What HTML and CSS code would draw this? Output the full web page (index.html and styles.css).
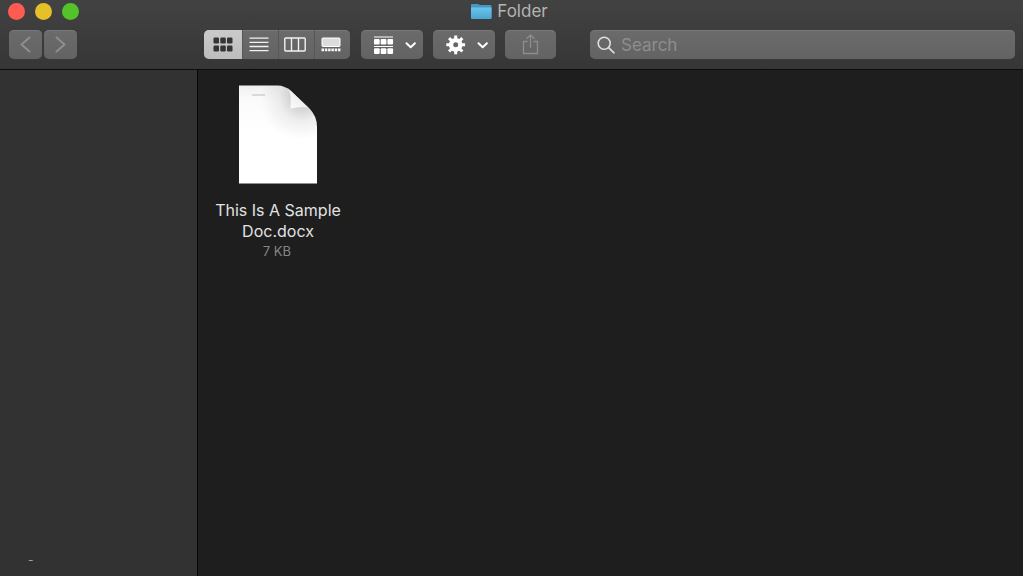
FILE: index.html
```html
<!DOCTYPE html>
<html lang="en">
<head>
<meta charset="utf-8">
<meta name="viewport" content="width=device-width, initial-scale=1">
<title>Folder</title>
<link rel="stylesheet" href="styles.css">
</head>
<body>
<div class="window">
  <header class="chrome">
    <div class="titlebar">
      <div class="lights">
        <button class="light light-close" type="button" aria-label="Close"></button>
        <button class="light light-minimize" type="button" aria-label="Minimize"></button>
        <button class="light light-zoom" type="button" aria-label="Zoom"></button>
      </div>
      <h1 class="title">
        <svg width="21" height="17" viewBox="0 0 21 17" aria-hidden="true">
          <defs>
            <linearGradient id="folder" x1="0" y1="0" x2="0" y2="1">
              <stop offset="0" stop-color="#6cc5eb"/>
              <stop offset="1" stop-color="#4ba5d0"/>
            </linearGradient>
          </defs>
          <path d="M0 2q0-1 1-1h6l2 1h10.500q1 0 1 1v12H0z" fill="#4398c4"/>
          <path d="M0 4.500h20.500V15.200q0 .8-1 .8H1q-1 0-1-.8z" fill="url(#folder)"/>
        </svg>
        <span>Folder</span>
      </h1>
    </div>
    <div class="toolbar">
      <nav class="history" aria-label="History">
        <button class="control nav" type="button" aria-label="Back">
          <svg width="33" height="29" viewBox="0 0 33 29"><path d="M20.500 7.500 12.500 14.500l8 7" class="line dim"/></svg>
        </button>
        <button class="control nav" type="button" aria-label="Forward">
          <svg width="33" height="29" viewBox="0 0 33 29"><path d="M12.500 7.500l8 7-8 7" class="line dim"/></svg>
        </button>
      </nav>
      <div class="views" role="group" aria-label="View">
        <button class="view selected" type="button" aria-label="Icons" aria-pressed="true">
          <svg width="20" height="15" viewBox="0 0 20 15" fill="#353535">
            <rect x="0.500" y="0.500" width="5.500" height="6" rx="1.200"/><rect x="7.300" y="0.500" width="5.500" height="6" rx="1.200"/><rect x="14" y="0.500" width="5.500" height="6" rx="1.200"/>
            <rect x="0.500" y="8.500" width="5.500" height="6" rx="1.200"/><rect x="7.300" y="8.500" width="5.500" height="6" rx="1.200"/><rect x="14" y="8.500" width="5.500" height="6" rx="1.200"/>
          </svg>
        </button>
        <button class="view" type="button" aria-label="List" aria-pressed="false">
          <svg width="20" height="15" viewBox="0 0 20 15"><path d="M.5 1.200h19M.5 5.300h19M.5 9.500h19M.5 13.600h19" stroke="#f2f2f2" stroke-width="1.300"/></svg>
        </button>
        <button class="view" type="button" aria-label="Columns" aria-pressed="false">
          <svg width="22" height="15" viewBox="0 0 22 15"><path d="M1.700 1h18.600q.9 0 .9.900v11.200q0 .9-.9.900H1.700q-.9 0-.9-.9V1.900q0-.9.9-.9zM7.500 1v13M14.500 1v13" fill="none" stroke="#f2f2f2" stroke-width="1.400"/></svg>
        </button>
        <button class="view" type="button" aria-label="Gallery" aria-pressed="false">
          <svg width="20" height="15" viewBox="0 0 20 15">
            <rect x="1" y="1" width="18" height="8.500" rx="0.800" fill="#dcdcdc" stroke="#fff"/>
            <path d="M.5 12.900h19" stroke="#f5f5f5" stroke-width="2.600" stroke-dasharray="2.500 .8"/>
          </svg>
        </button>
      </div>
      <button class="control menu" type="button" aria-label="Arrange by" aria-haspopup="menu">
        <svg width="62" height="29" viewBox="0 0 62 29">
          <path d="M13 7h19M13 16.500h19" stroke="#fff" stroke-width="1.200"/>
          <g fill="#fff">
            <rect x="13" y="9" width="5.700" height="5.500" rx="1"/><rect x="19.700" y="9" width="5.700" height="5.500" rx="1"/><rect x="26.400" y="9" width="5.700" height="5.500" rx="1"/>
            <rect x="13" y="18.300" width="5.700" height="5.700" rx="1"/><rect x="19.700" y="18.300" width="5.700" height="5.700" rx="1"/><rect x="26.400" y="18.300" width="5.700" height="5.700" rx="1"/>
          </g>
          <path d="M45.500 13.300l4.200 4 4.200-4" class="line bright"/>
        </svg>
      </button>
      <button class="control menu" type="button" aria-label="Action" aria-haspopup="menu">
        <svg width="62" height="29" viewBox="0 0 62 29">
          <g transform="translate(22.700 14.800)">
            <g stroke="#fff" stroke-width="3">
              <path d="M0-9.400V-4M0 9.400V4M-9.400 0H-4M9.400 0H4"/>
              <path d="M0-9.400V-4M0 9.400V4M-9.400 0H-4M9.400 0H4" transform="rotate(45)"/>
            </g>
            <circle r="4.700" fill="none" stroke="#fff" stroke-width="4.400"/>
          </g>
          <path d="M45.500 13.300l4.200 4 4.200-4" class="line bright"/>
        </svg>
      </button>
      <button class="control share" type="button" aria-label="Share">
        <svg width="51" height="29" viewBox="0 0 51 29"><path d="M22.500 11.500h-4v12h14v-12h-4M25.500 18V5M21.500 8.800l4-4 4 4" fill="none" stroke="#8d8d8d" stroke-width="1.300"/></svg>
      </button>
      <label class="control search">
        <svg width="18" height="18" viewBox="0 0 18 18" aria-hidden="true"><circle cx="7.200" cy="7.200" r="6" class="line glass"/><path d="M11.600 11.600l5.400 5.200" class="line glass"/></svg>
        <input class="search-input" type="search" placeholder="Search" aria-label="Search">
      </label>
    </div>
  </header>
  <div class="body">
    <aside class="sidebar"><span class="sidebar-mark">-</span></aside>
    <main class="files">
      <figure class="file">
        <svg width="80" height="100" viewBox="0 0 80 100" aria-hidden="true">
          <defs>
            <linearGradient id="paper" x1="0" y1="0" x2="0" y2="1">
              <stop offset="0" stop-color="#f0f0f0"/>
              <stop offset=".15" stop-color="#fbfbfb"/>
              <stop offset=".5" stop-color="#fff"/>
            </linearGradient>
            <radialGradient id="shade" gradientUnits="userSpaceOnUse" cx="64" cy="13" r="42">
              <stop offset=".25" stop-color="#000" stop-opacity=".16"/>
              <stop offset=".55" stop-color="#000" stop-opacity=".06"/>
              <stop offset="1" stop-color="#000" stop-opacity="0"/>
            </radialGradient>
            <linearGradient id="curl" x1="0" y1="1" x2=".6" y2=".4">
              <stop offset="0" stop-color="#fff"/>
              <stop offset="1" stop-color="#ececec"/>
            </linearGradient>
          </defs>
          <path d="M1 .5h38q8 0 14 5.500L71 23q8 8 8 19v56.500H1z" fill="url(#paper)"/>
          <path d="M1 .5h38q8 0 14 5.500L71 23q8 8 8 19v56.500H1z" fill="url(#shade)"/>
          <path d="M49 3q5 4 3.500 20.500Q64 21 70 22.500L53 6z" fill="url(#curl)"/>
          <path d="M14 10h13" stroke="#cfcfcf" stroke-width="1.500"/>
        </svg>
        <figcaption class="caption">
          <span class="name">This Is A Sample Doc.docx</span>
          <span class="size">7 KB</span>
        </figcaption>
      </figure>
    </main>
  </div>
</div>
</body>
</html>
```
FILE: styles.css
```css
* {
  box-sizing: border-box;
}

body {
  margin: 0;
  background: #1e1e1e;
  font-family: Inter, "Liberation Sans", sans-serif;
}

button {
  padding: 0;
  border: 0;
  font: inherit;
}

svg {
  display: block;
  flex: none;
}

.window {
  display: flex;
  flex-direction: column;
  min-height: 100vh;
}

.chrome {
  padding-bottom: 10px;
  border-bottom: 1px solid #0c0c0c;
  background: linear-gradient(#424242, #363636);
}

.titlebar {
  display: grid;
  grid-template-columns: 1fr auto 1fr;
  align-items: center;
  height: 23px;
  padding: 0 12px 0 8px;
}

.lights {
  display: flex;
  gap: 10px;
}

.light {
  width: 17px;
  height: 17px;
  border-radius: 50%;
}

.light-close {
  background: #ff5b52;
}

.light-minimize {
  background: #e6c029;
}

.light-zoom {
  background: #53c22b;
}

.title {
  display: flex;
  align-items: center;
  gap: 5px;
  margin: 0;
  color: #b4b4b4;
  font-size: 17px;
  font-weight: 400;
  line-height: 23px;
}

.toolbar {
  display: flex;
  align-items: center;
  padding: 7px 8px 0 9px;
}

.control {
  height: 29px;
  border-radius: 5px;
  background: linear-gradient(#6b6b6b, #636363);
  box-shadow: inset 0 1px 0 #787878;
}

.history {
  display: flex;
  gap: 2px;
  margin-right: 127px;
}

.views {
  display: flex;
  margin-right: 11px;
  overflow: hidden;
  border-radius: 5px;
  background: linear-gradient(#6b6b6b, #636363);
  box-shadow: inset 0 1px 0 #787878;
}

.view {
  display: flex;
  align-items: center;
  justify-content: center;
  width: 36px;
  height: 29px;
  padding-right: 3px;
  border-left: 1px solid #575757;
  background: transparent;
}

.selected {
  width: 38px;
  padding-right: 0;
  border-left: 0;
  background: linear-gradient(#cacaca, #bdbdbd);
}

.menu {
  margin-right: 10px;
}

.share {
  margin-right: 34px;
}

.search {
  display: flex;
  flex: 1;
  align-items: center;
  gap: 6px;
  min-width: 0;
  padding: 0 7px;
}

.search-input {
  flex: 1;
  min-width: 0;
  height: 29px;
  padding: 0;
  border: 0;
  outline: 0;
  background: transparent;
  color: #e6e6e6;
  font: 17px Inter, "Liberation Sans", sans-serif;
}

.search-input::placeholder {
  color: #8e8e8e;
  opacity: 1;
}

.line {
  fill: none;
  stroke-linecap: round;
  stroke-linejoin: round;
}

.dim {
  stroke: #8e8e8e;
  stroke-width: 2;
}

.bright {
  stroke: #fff;
  stroke-width: 2;
}

.glass {
  stroke: #dedede;
  stroke-width: 1.6px;
}

.body {
  display: flex;
  flex: 1;
}

.sidebar {
  display: flex;
  flex: none;
  align-items: flex-end;
  width: 198px;
  padding: 0 28px 8px;
  border-right: 1px solid #050505;
  background: #323232;
  color: #a0a0a0;
  font-size: 12px;
  line-height: 16px;
}

.files {
  flex: 1;
  padding: 15px 10px;
}

.file {
  display: flex;
  flex-direction: column;
  align-items: center;
  width: 140px;
  margin: 0;
}

.caption {
  display: flex;
  flex-direction: column;
  margin-top: 15px;
  text-align: center;
}

.name {
  color: #e2e2e2;
  font-size: 16px;
  line-height: 21px;
}

.size {
  padding-right: 2px;
  color: #858585;
  font-size: 13px;
  line-height: 18px;
}
```
